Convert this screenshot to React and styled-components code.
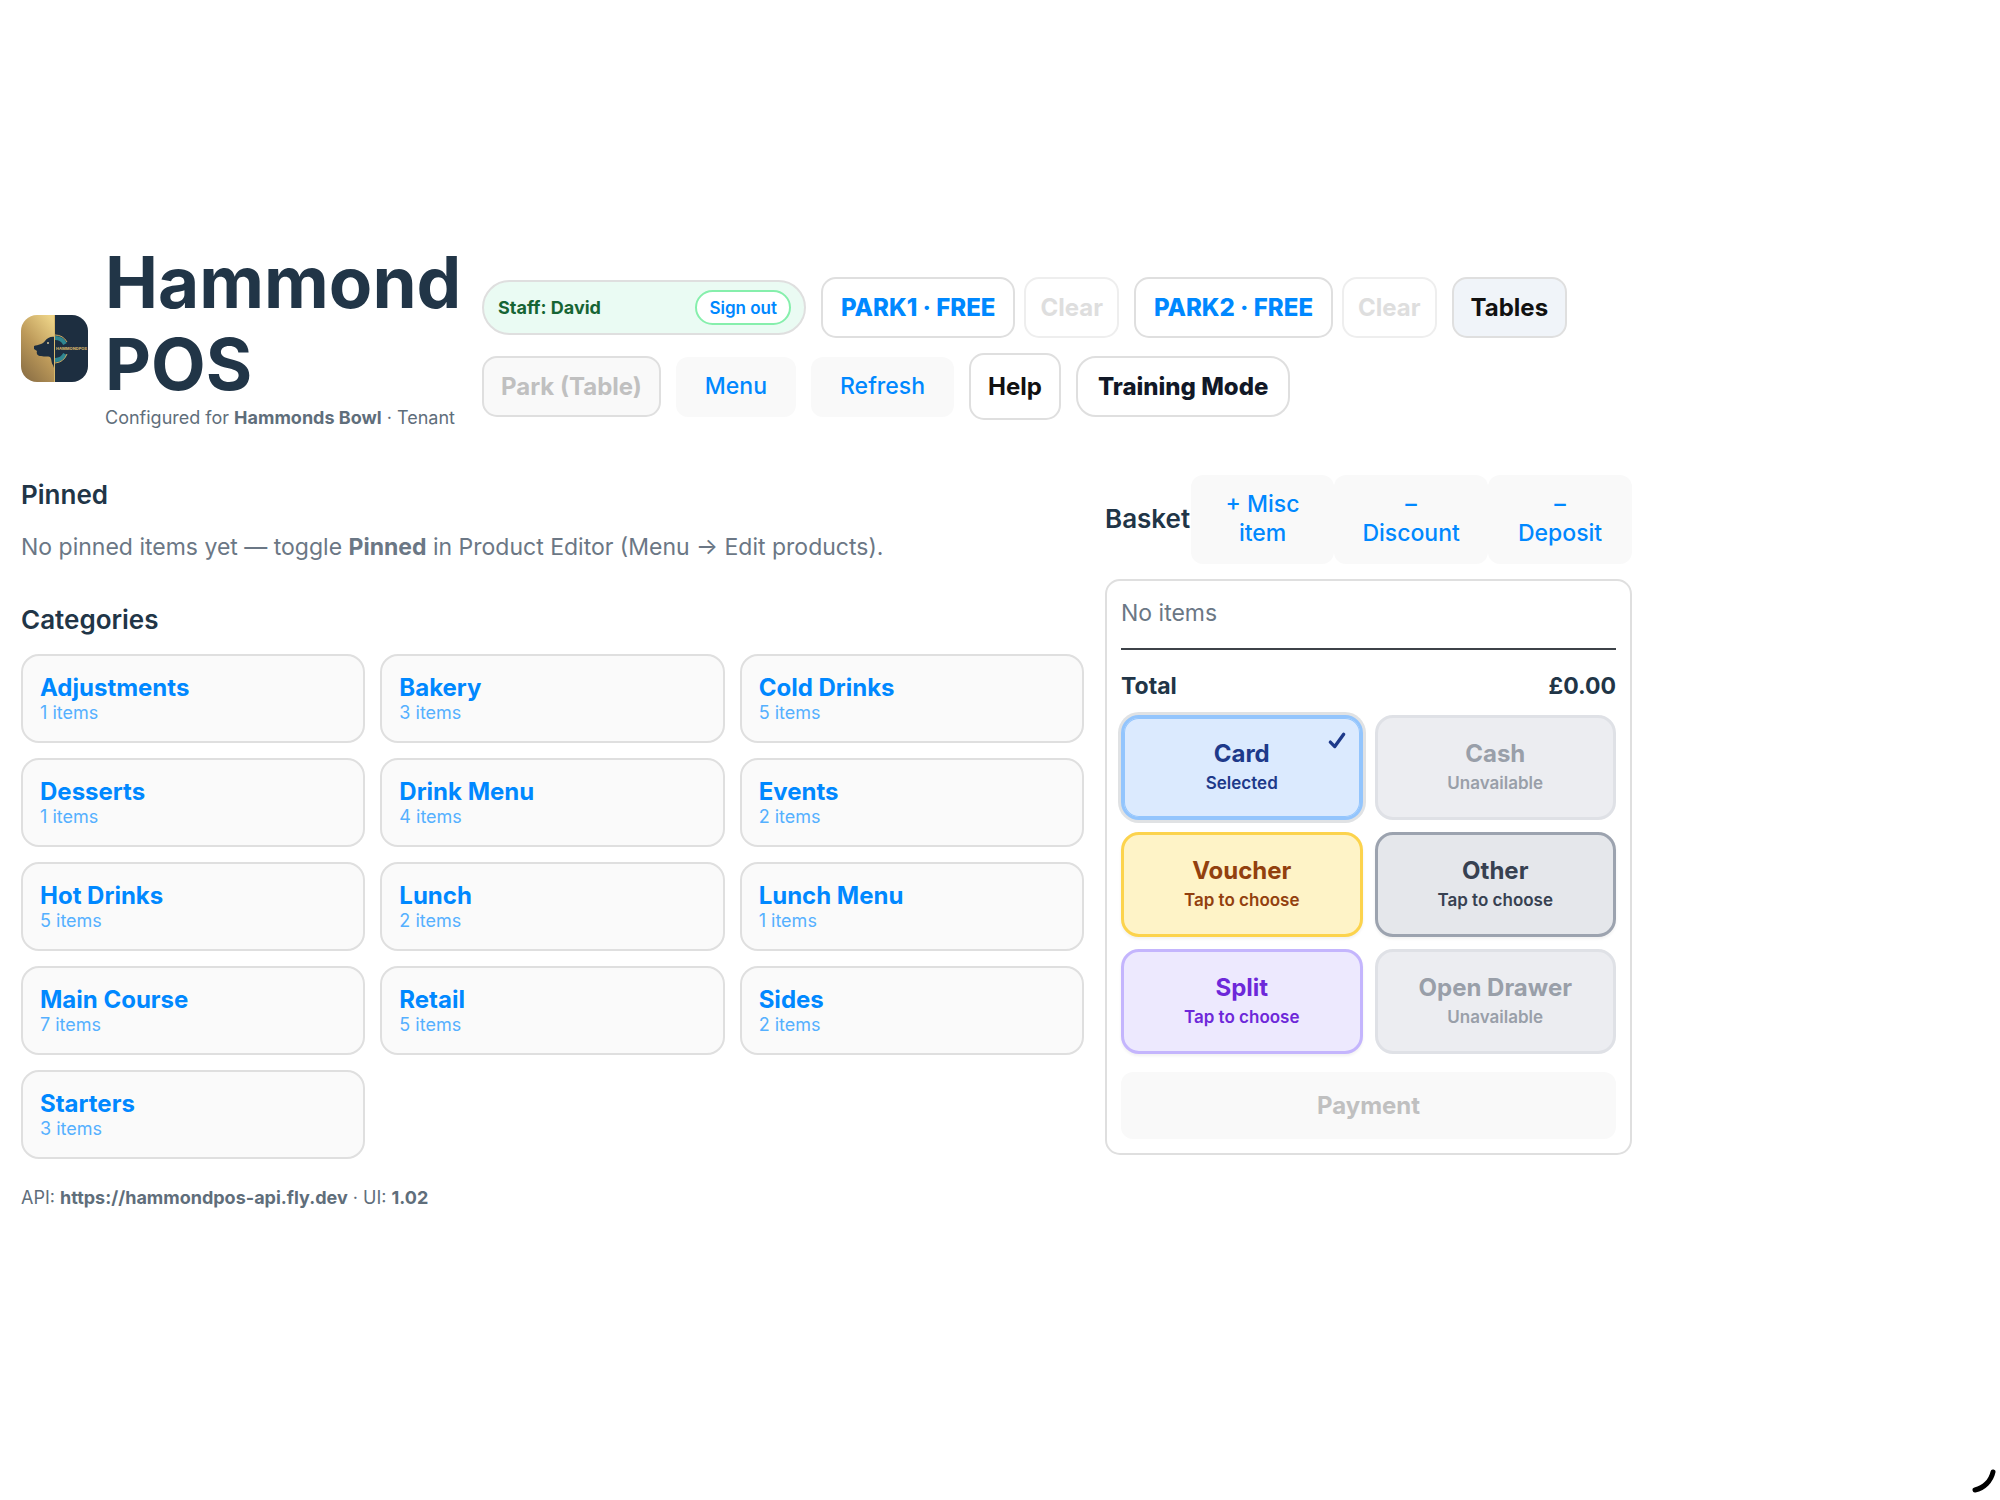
import React, { useState } from 'react';
import styled, { createGlobalStyle } from 'styled-components';

const GlobalStyle = createGlobalStyle`
    * {
        box-sizing: border-box;
    }
    body {
        margin: 0;
        background: #ffffff;
        color: #213547;
        font-family: Inter, "Liberation Sans", sans-serif;
        font-size: 23px;
        line-height: 36px;
    }
    button {
        font-family: inherit;
        font-size: 23px;
        line-height: 29px;
        cursor: pointer;
    }
    button:disabled {
        cursor: default;
    }
    h1, h2, p {
        margin: 0;
    }
`;

const Page = styled.div`
    min-height: 100vh;
    display: flex;
    align-items: center;
`;
const Shell = styled.div`
    width: 100%;
    max-width: 1653px;
    padding: 0 21px 49px;
`;

/* header */
const Header = styled.header`
    display: flex;
    align-items: center;
    gap: 20px;
    margin-bottom: 18px;
`;
const Brand = styled.div`
    flex: 0 0 441px;
    display: flex;
    align-items: center;
    gap: 17px;
`;
const Logo = styled.svg`
    flex: none;
    width: 67px;
    height: 67px;
`;
const BrandText = styled.div`
    padding-bottom: 26px;
`;
const Title = styled.h1`
    font-size: 71px;
    line-height: 82px;
    font-weight: 700;
`;
const Configured = styled.p`
    color: #5f6e7b;
    font-size: 18px;
    line-height: 26px;
    white-space: nowrap;
`;
const Toolbar = styled.div`
    flex: 1;
    display: flex;
    flex-wrap: wrap;
    align-items: center;
    gap: 15px;
`;
const StaffPill = styled.div`
    width: 324px;
    height: 55px;
    padding: 0 13px 0 14px;
    display: flex;
    align-items: center;
    justify-content: space-between;
    border: 2px solid #dfdfdf;
    border-radius: 28px;
    background: #eafbf3;
    color: #166534;
    font-size: 18px;
    font-weight: 700;
`;
const SignOut = styled.button`
    height: 35px;
    padding: 0 12px;
    border: 2px solid #86efac;
    border-radius: 18px;
    background: #ffffff;
    color: #0088ff;
    font-size: 17px;
    line-height: 24px;
    font-weight: 600;
`;
const ParkGroup = styled.div`
    display: flex;
    gap: 9px;
`;
const ToolButton = styled.button`
    height: ${props => props.$height || 61}px;
    padding: 0 ${props => props.$pad || 18}px;
    border: 2px solid #dfdfdf;
    border-radius: ${props => props.$radius || 15}px;
    background: ${props => props.$bg || '#ffffff'};
    color: ${props => props.$color || '#111111'};
    font-size: 24px;
    font-weight: ${props => props.$weight || 700};
    white-space: nowrap;
`;
const ClearButton = styled(ToolButton)`
    border-color: #eeeeee;
    color: #dedede;
`;
const PlainButton = styled.button`
    min-height: 60px;
    padding: 0 29px;
    border: none;
    border-radius: 12px;
    background: #f9f9f9;
    color: #0088ff;
    font-weight: 500;
`;

/* products */
const Main = styled.main`
    display: grid;
    grid-template-columns: minmax(0, 1fr) 527px;
    gap: 21px;
    align-items: start;
`;
const Heading = styled.h2`
    font-size: 26px;
    line-height: 40px;
    font-weight: 600;
`;
const Muted = styled.p`
    color: #6b7785;
`;
const Section = styled.section`
    margin-bottom: 35px;

    ${Heading} {
        margin-bottom: 14px;
    }
    &:last-child {
        margin-bottom: 0;
    }
`;
const Grid = styled.div`
    display: grid;
    grid-template-columns: repeat(3, minmax(0, 1fr));
    gap: 15px;
`;
const Category = styled.button`
    height: 89px;
    padding: 0 17px;
    border: 2px solid #dfdfdf;
    border-radius: 18px;
    background: #fafafa;
    color: #0088ff;
    text-align: left;
    font-size: 24px;
    font-weight: 700;
`;
const Count = styled.span`
    display: block;
    color: #55b0ff;
    font-size: 18px;
    line-height: 22px;
    font-weight: 400;
`;

/* basket */
const BasketBar = styled.div`
    display: flex;
    align-items: center;
    margin-bottom: 15px;

    ${Heading} {
        flex: 0 0 86px;
    }
`;
const BasketAction = styled(PlainButton)`
    flex: ${props => props.$grow || 1} 1 0;
    height: 89px;
    padding: 0 16px;
`;
const Panel = styled.div`
    padding: 14px;
    border: 2px solid #dfdfdf;
    border-radius: 15px;
`;
const Rule = styled.hr`
    margin: 17px 0 18px;
    border: none;
    border-top: 2px solid #3d4248;
`;
const Total = styled.div`
    display: flex;
    justify-content: space-between;
    margin-bottom: 11px;
    font-weight: 700;
`;
const Tenders = styled.div`
    display: grid;
    grid-template-columns: 1fr 1fr;
    gap: 12px;
    margin-bottom: 18px;
`;
const Tender = styled.button`
    position: relative;
    height: 105px;
    border: 3px solid ${props => props.$line};
    border-radius: 18px;
    background: ${props => props.$bg};
    color: ${props => props.$color};
    font-size: 24px;
    font-weight: 700;
    box-shadow: ${props => props.$selected
        ? '0 0 0 3px #e0e2e4, inset 0 0 0 1px #93c5fd'
        : props.disabled ? 'none' : '0 2px 3px rgba(0, 0, 0, 0.06)'};
`;
const Hint = styled.span`
    display: block;
    margin-top: 3px;
    font-size: 17px;
    line-height: 24px;
    font-weight: 600;
`;
const Tick = styled.svg`
    position: absolute;
    top: 13px;
    right: 13px;
    width: 20px;
    height: 20px;
`;
const Payment = styled(PlainButton)`
    display: block;
    width: 100%;
    height: 67px;
    color: #c0c0c0;
    font-size: 24px;
    font-weight: 700;
`;

const Footer = styled.footer`
    margin-top: 26px;
    color: #5f6e7b;
    font-size: 18px;
    line-height: 26px;
`;
const Spinner = styled.svg`
    position: fixed;
    right: 3px;
    bottom: 6px;
    width: 26px;
    height: 26px;
`;

const categories = [
    ['Adjustments', 1],
    ['Bakery', 3],
    ['Cold Drinks', 5],
    ['Desserts', 1],
    ['Drink Menu', 4],
    ['Events', 2],
    ['Hot Drinks', 5],
    ['Lunch', 2],
    ['Lunch Menu', 1],
    ['Main Course', 7],
    ['Retail', 5],
    ['Sides', 2],
    ['Starters', 3],
];

const off = { line: '#dfe1e6', bg: '#ecedf1', color: '#999fa9', disabled: true };
const tenders = [
    { name: 'Card', line: '#93c5fd', bg: '#dbeafe', color: '#1e3a8a' },
    { name: 'Cash', ...off },
    { name: 'Voucher', line: '#fcd34d', bg: '#fef3c7', color: '#92400e' },
    { name: 'Other', line: '#9ca3af', bg: '#e5e7eb', color: '#374151' },
    { name: 'Split', line: '#c4b5fd', bg: '#ede9fe', color: '#6d28d9' },
    { name: 'Open Drawer', ...off },
];

function BrandLogo(){
    return(
        <Logo viewBox="0 0 67 67" role="img" aria-label="Hammond POS logo">
            <defs>
                <linearGradient id="gold" x1="0.8" y1="0" x2="0.2" y2="1">
                    <stop offset="0" stopColor="#ecd286"/>
                    <stop offset="0.5" stopColor="#bd9a5a"/>
                    <stop offset="1" stopColor="#8c7045"/>
                </linearGradient>
                <clipPath id="tile">
                    <rect width="67" height="67" rx="16"/>
                </clipPath>
            </defs>
            <g clipPath="url(#tile)">
                <rect width="34" height="67" fill="url(#gold)"/>
                <rect x="34" width="33" height="67" fill="#1d2e40"/>
                <path d="M34 22 C30 21 26 23 24 26 C22 29 17 30 13 31 L13 34 L16 36 C15 39 17 41 20 41 C24 42 27 41 29 42 C31 44 30 48 32 50 L33 53 L34 53 Z" fill="#1d2e40"/>
                <circle cx="27" cy="28" r="1" fill="#d9c79a"/>
                <path d="M34 23 A11 11 0 0 1 44 29 M44 39 A11 11 0 0 1 34 45" fill="none" stroke="#2f8791" strokeWidth="4"/>
                <path d="M34 20 A14 14 0 0 1 46 27 M46 39 A14 14 0 0 1 34 48" fill="none" stroke="#c9ab66" strokeWidth="1"/>
                <rect x="33" width="1" height="67" fill="#d8b96d"/>
                <text x="35" y="35" fontFamily="Inter, sans-serif" fontSize="4" fontWeight="800" fill="#c9ab66">HAMMONDPOS</text>
            </g>
        </Logo>
    );
}

function TopBar(){
    return(
        <Header>
            <Brand>
                <BrandLogo/>
                <BrandText>
                    <Title>Hammond POS</Title>
                    <Configured>Configured for <strong>Hammonds Bowl</strong> · Tenant</Configured>
                </BrandText>
            </Brand>
            <Toolbar>
                <StaffPill>
                    <span>Staff: David</span>
                    <SignOut type="button">Sign out</SignOut>
                </StaffPill>
                <ParkGroup>
                    <ToolButton type="button" $color="#0088ff" $weight={800}>PARK1 · FREE</ToolButton>
                    <ClearButton type="button" $pad={14} disabled>Clear</ClearButton>
                </ParkGroup>
                <ParkGroup>
                    <ToolButton type="button" $color="#0088ff" $weight={800}>PARK2 · FREE</ToolButton>
                    <ClearButton type="button" $pad={14} disabled>Clear</ClearButton>
                </ParkGroup>
                <ToolButton type="button" $bg="#f0f4f9" $pad={17}>Tables</ToolButton>
                <ToolButton type="button" $bg="#f9f9f9" $color="#c0c0c0" $pad={17} disabled>Park (Table)</ToolButton>
                <PlainButton type="button">Menu</PlainButton>
                <PlainButton type="button">Refresh</PlainButton>
                <ToolButton type="button" $height={67} $pad={17}>Help</ToolButton>
                <ToolButton type="button" $color="#111827" $pad={20} $radius={20} $weight={800}>Training Mode</ToolButton>
            </Toolbar>
        </Header>
    );
}

function Products(){
    return(
        <div>
            <Section>
                <Heading>Pinned</Heading>
                <Muted>No pinned items yet — toggle <strong>Pinned</strong> in Product Editor (Menu → Edit products).</Muted>
            </Section>
            <Section>
                <Heading>Categories</Heading>
                <Grid>
                    {categories.map(([name, count]) => (
                        <Category type="button" key={name}>
                            {name}
                            <Count>{count} items</Count>
                        </Category>
                    ))}
                </Grid>
            </Section>
        </div>
    );
}

function Basket(){
    const [selected, setSelected] = useState('Card');
    const hint = tender => {
        if (tender.disabled) return 'Unavailable';
        return tender.name === selected ? 'Selected' : 'Tap to choose';
    };
    return(
        <aside>
            <BasketBar>
                <Heading>Basket</Heading>
                <BasketAction type="button" $grow={142}>+ Misc<br/>item</BasketAction>
                <BasketAction type="button" $grow={156}>–<br/>Discount</BasketAction>
                <BasketAction type="button" $grow={143}>–<br/>Deposit</BasketAction>
            </BasketBar>
            <Panel>
                <Muted>No items</Muted>
                <Rule/>
                <Total>
                    <span>Total</span>
                    <span>£0.00</span>
                </Total>
                <Tenders>
                    {tenders.map(tender => (
                        <Tender
                            type="button"
                            key={tender.name}
                            $line={tender.line}
                            $bg={tender.bg}
                            $color={tender.color}
                            $selected={tender.name === selected}
                            disabled={tender.disabled}
                            onClick={() => setSelected(tender.name)}
                        >
                            {tender.name}
                            <Hint>{hint(tender)}</Hint>
                            {tender.name === selected && (
                                <Tick viewBox="0 0 18 18" aria-hidden="true">
                                    <path d="M3 10 L7 14 L15 3" fill="none" stroke="currentColor" strokeWidth="3" strokeLinecap="round" strokeLinejoin="round"/>
                                </Tick>
                            )}
                        </Tender>
                    ))}
                </Tenders>
                <Payment type="button" disabled>Payment</Payment>
            </Panel>
        </aside>
    );
}

export default () => {
    return (
        <Page>
            <GlobalStyle/>
            <Shell>
                <TopBar/>
                <Main>
                    <Products/>
                    <Basket/>
                </Main>
                <Footer>API: <strong>https://hammondpos-api.fly.dev</strong> · UI: <strong>1.02</strong></Footer>
            </Shell>
            <Spinner viewBox="0 0 26 26" aria-hidden="true">
                <path d="M4 22 C13 20 20 13 22 4" fill="none" stroke="#000000" strokeWidth="5" strokeLinecap="round"/>
            </Spinner>
        </Page>
    );
}
